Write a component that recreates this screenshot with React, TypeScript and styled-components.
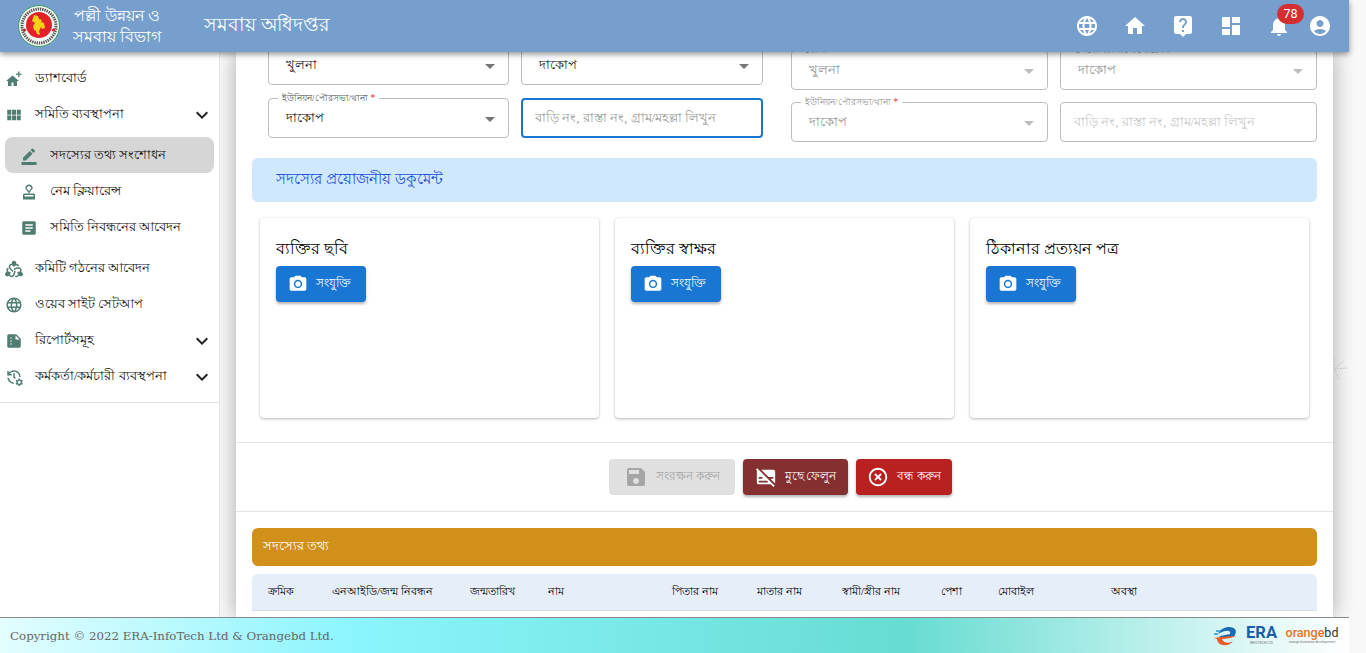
import React from "react";
import styled, { createGlobalStyle } from "styled-components";
import {
  MdLanguage, MdHome, MdLiveHelp, MdDashboard, MdNotifications, MdAccountCircle, MdViewModule,
  MdBorderColor, MdOutlineApproval, MdArticle, MdDiversity2, MdSummarize, MdManageHistory,
  MdExpandMore, MdPhotoCamera, MdSave, MdSubtitlesOff, MdHighlightOff, MdArrowDropDown,
} from "react-icons/md";

const Global = createGlobalStyle`
  html, body { margin: 0; padding: 0; height: 100%; overflow: hidden; }
  body { font-family: "Liberation Serif", serif; background: #f8f8f8; color: #000; }
  #root { height: 100%; }
`;
const Page = styled.div`
  height: 653px;
  display: flex;
  flex-direction: column;
  overflow: hidden;
`;
const Header = styled.header`
  height: 52px;
  width: 1349px;
  flex: none;
  background: #769fce;
  box-shadow: 0 2px 6px rgba(0,0,0,.45);
  display: flex;
  align-items: center;
  color: #fff;
  position: relative;
  z-index: 3;
  box-sizing: border-box;
  padding-left: 18px;
`;
const BrandText = styled.div`
  margin-left: 12px;
  font-size: 15.5px;
  line-height: 21px;
  text-align: center;
  width: 90px;
`;
const Title = styled.div`
  margin-left: 42px;
  font-size: 18.5px;
`;
const HeaderIcons = styled.div`
  margin-left: auto;
  display: flex;
  align-items: center;
  gap: 24px;
  padding-right: 17px;
  font-size: 24px;
`;
const IconSlot = styled.span`
  position: relative;
  display: flex;
  width: 24px;
  height: 24px;
  &:last-child { margin-left: -7px; }
`;
const Badge = styled.span`
  position: absolute;
  top: -10px;
  left: 10px;
  width: 27px;
  height: 20px;
  border-radius: 10px;
  background: #d32f2f;
  color: #fff;
  font-family: Roboto, sans-serif;
  font-size: 12.5px;
  line-height: 20px;
  text-align: center;
`;
const Workspace = styled.div`
  flex: 1;
  min-height: 0;
  display: flex;
`;
const Sidebar = styled.nav`
  width: 220px;
  flex: none;
  background: #fff;
  box-sizing: border-box;
  border-right: 1px solid #e4e4e4;
  position: relative;
  z-index: 2;
`;
const Menu = styled.div`
  padding: 9px 0 8px;
  border-bottom: 1px solid #e0e0e0;
  height: 351px;
  box-sizing: border-box;
`;
const Item = styled.div<{ $sub?: boolean; $active?: boolean; $gapTop?: number }>`
  height: 36px;
  display: flex;
  align-items: center;
  box-sizing: border-box;
  font-size: 12.5px;
  color: #111;
  margin: ${(p) => (p.$sub ? "0 5px 0 5px" : "0")};
  margin-top: ${(p) => p.$gapTop ?? 0}px;
  padding-left: ${(p) => (p.$sub ? "15px" : "5px")};
  padding-right: 5px;
  padding-top: ${(p) => (p.$active ? "2px" : "0")};
  border-radius: 8px;
  background: ${(p) => (p.$active ? "#d6d6d6" : "transparent")};
`;
const ItemIcon = styled.span`
  display: flex;
  width: 30px;
  font-size: 18px;
  color: #4f7d72;
  flex: none;
`;
const Chevron = styled.span`
  margin-left: auto;
  display: flex;
  font-size: 24px;
  color: #222;
`;
const Canvas = styled.main`
  flex: 1;
  min-width: 0;
  padding: 0 33px 0 16px;
  overflow: hidden;
  position: relative;
`;
const GutterMark = styled.svg`
  position: absolute;
  right: 17px;
  top: 301px;
  color: #c4c4c4;
`;
const Panel = styled.div`
  display: flow-root;
  background: #fff;
  min-height: 100%;
  box-shadow: 0 0 20px rgba(0,0,0,.32);
`;
const FormGrid = styled.div`
  margin-top: -7px;
  padding: 0 16px 0 32px;
  display: grid;
  grid-template-columns: 495px 526px;
  column-gap: 28px;
  align-items: start;
`;
const FieldGroup = styled.div<{ $right?: boolean }>`
  display: grid;
  grid-template-columns: 241px 242px;
  gap: 13px 12px;
  ${(p) => p.$right && "grid-template-columns: 257px 257px; row-gap: 12px; margin-top: 5px;"}
`;
const Field = styled.div<{ $disabled?: boolean; $focus?: boolean; $plain?: boolean }>`
  position: relative;
  height: 40px;
  box-sizing: border-box;
  border: ${(p) => (p.$focus ? "2px solid #1976d2" : "1px solid #bdbdbd")};
  border-radius: 4px;
  display: flex;
  align-items: center;
  padding-left: ${(p) => (p.$focus ? "12px" : p.$plain ? "13px" : "17px")};
  font-size: 13px;
  color: ${(p) => (p.$disabled ? "#8f8f8f" : "#111")};
  background: #fff;
`;
const Legend = styled.label<{ $disabled?: boolean }>`
  position: absolute;
  top: -7px;
  left: 9px;
  padding: 0 4px;
  background: #fff;
  font-size: 9px;
  line-height: 12px;
  white-space: nowrap;
  color: ${(p) => (p.$disabled ? "#8f8f8f" : "#555")};
`;
const Star = styled.span`
  color: #e53935;
  font-size: 10px;
`;
const Placeholder = styled.span<{ $disabled?: boolean }>`
  color: ${(p) => (p.$disabled ? "#c8c8c8" : "#9a9a9a")};
`;
const Arrow = styled.span<{ $disabled?: boolean }>`
  position: absolute;
  right: 6px;
  top: 8px;
  display: flex;
  font-size: 24px;
  color: ${(p) => (p.$disabled ? "#bdbdbd" : "#757575")};
`;
const DocBand = styled.div`
  margin: 16px 16px 0;
  height: 44px;
  box-sizing: border-box;
  padding: 0 0 2px 24px;
  background: #d0e8fd;
  border-radius: 6px;
  display: flex;
  align-items: center;
  font-size: 15px;
  color: #1d4ed8;
`;
const Cards = styled.div`
  margin: 16px 24px 0;
  display: grid;
  grid-template-columns: repeat(3, 339px);
  column-gap: 16px;
`;
const Card = styled.div`
  height: 200px;
  box-sizing: border-box;
  border-radius: 4px;
  padding: 20px 16px;
  background: #fff;
  box-shadow: 0 1px 3px rgba(0,0,0,.28), 0 0 1px rgba(0,0,0,.1);
`;
const CardTitle = styled.div`
  font-size: 16px;
  line-height: 22px;
  margin-bottom: 6px;
`;
const AttachButton = styled.button`
  width: 90px;
  height: 36px;
  border: 0;
  border-radius: 4px;
  background: #1976d2;
  color: #fff;
  display: flex;
  align-items: center;
  padding: 0 0 0 12px;
  gap: 8px;
  font-family: inherit;
  font-size: 12px;
  box-shadow: 0 2px 3px rgba(0,0,0,.3);
  svg { font-size: 20px; }
`;
const ActionBar = styled.div`
  margin-top: 24px;
  height: 70px;
  box-sizing: border-box;
  border-top: 1px solid #e4e4e4;
  border-bottom: 1px solid #e4e4e4;
  display: flex;
  justify-content: center;
  align-items: center;
  gap: 8px;
  padding-right: 8px;
`;
const ActionButton = styled.button<{ $bg: string; $fg: string; $w: number; $flat?: boolean }>`
  width: ${(p) => p.$w}px;
  height: 36px;
  border: 0;
  border-radius: 4px;
  background: ${(p) => p.$bg};
  color: ${(p) => p.$fg};
  display: flex;
  align-items: center;
  justify-content: center;
  gap: 8px;
  padding: 0;
  font-family: inherit;
  font-size: 11.5px;
  box-shadow: ${(p) => (p.$flat ? "none" : "0 2px 3px rgba(0,0,0,.3)")};
  svg { font-size: ${(p) => (p.$flat ? 24 : 22)}px; flex: none; }
`;
const MemberBand = styled.div`
  margin: 16px 16px 0;
  height: 38px;
  background: #d19019;
  border-radius: 6px;
  display: flex;
  align-items: center;
  padding-left: 11px;
  font-size: 12.5px;
  color: #fff;
`;
const TableHead = styled.div`
  margin: 8px 16px 0;
  height: 37px;
  box-sizing: border-box;
  background: #e6eefa;
  border-bottom: 1px solid #dcdcdc;
  border-radius: 6px 6px 0 0;
  display: grid;
  grid-template-columns: 64px 138px 78px 124px 85px 85px 99px 57px 113px 1fr;
  align-items: center;
  padding-left: 16px;
  font-size: 11px;
  color: #000;
`;
const Footer = styled.footer`
  height: 36px;
  width: 1349px;
  flex: none;
  box-sizing: border-box;
  border-top: 1px solid #8a8a8a;
  background: linear-gradient(90deg, #e3fdff 0%, #8cf5fd 26%, #66dcd2 67%, #ffffff 100%);
  display: flex;
  align-items: center;
  padding: 0 11px 0 10px;
  font-family: "DejaVu Serif", serif;
  font-size: 11.8px;
  color: #666;
  position: relative;
  z-index: 3;
`;
const FooterLogos = styled.div`
  margin-left: auto;
  display: flex;
  align-items: center;
  gap: 9px;
  font-family: Roboto, sans-serif;
`;
const Era = styled.div`
  display: flex;
  flex-direction: column;
  align-items: center;
  color: #1b5fa8;
  font-weight: 700;
  font-size: 16.5px;
  line-height: 16px;
`;
const Tiny = styled.span`
  font-size: 3.5px;
  line-height: 5px;
  font-weight: 400;
  color: #777;
  white-space: nowrap;
`;
const Orange = styled.div`
  width: 52px;
  display: flex;
  flex-direction: column;
  align-items: center;
  color: #e8702a;
  font-size: 12.5px;
  line-height: 14px;
  font-weight: 500;
  b { font-weight: 400; color: #333; }
`;

const Logo = () => (
  <svg width="42" height="42" viewBox="0 0 42 42">
    <circle cx="21" cy="21" r="20.5" fill="#f4f8f4" stroke="#3f9a62" strokeWidth="1" />
    <circle cx="21" cy="21" r="17" fill="none" stroke="#222" strokeWidth="3" strokeDasharray="1.4 .9" opacity=".75" />
    <circle cx="21" cy="20" r="13" fill="#e32128" />
    <path d="M16 10l4 1 1 3 3 1-1 2 3 1 1 5-3 1-1-2-2 4 1 4-3-1-1-3-2-1-1-4 2-3-3-2z" fill="#f6d116" />
    <circle cx="6.5" cy="25" r="1.6" fill="#d32027" />
    <circle cx="35.5" cy="25" r="1.6" fill="#d32027" />
  </svg>
);
const HomePlus = () => (
  <svg width="18" height="18" viewBox="0 0 18 18" fill="currentColor">
    <path d="M7.5 5.5L1 11h2v5h3.5v-3.5h2V16H12v-5h2z" />
    <path d="M13 1.5h1.6v2h2v1.6h-2v2H13v-2h-2V3.500h2z" opacity=".85" />
  </svg>
);
const EraMark = () => (
  <svg width="24" height="22" viewBox="0 0 24 22">
    <path d="M5 9c3-7 13-9 17-5 2 3 0 7-2 8H6c2-2 9-2 11-3 1-2-1-4-4-3-3 0-6 2-8 3z" fill="#1b6cb5" />
    <path d="M1 13c6-1 14-2 22-2-4 2-10 3-14 3 1 4 7 5 11 2-3 5-12 6-15 1-1-1-1-3-1-3z" fill="#ee5a24" />
    <path d="M3 6h5M1 9h4" stroke="#2f8fd6" strokeWidth="1.3" />
  </svg>
);

type F = { label?: string; req?: boolean; value?: string; ph?: string; focus?: boolean };
const left: F[] = [
  { label: "জেলা", value: "খুলনা" },
  { label: "উপজেলা/থানা", value: "দাকোপ" },
  { label: "ইউনিয়ন/পৌরসভা/থানা", req: true, value: "দাকোপ" },
  { ph: "বাড়ি নং, রাস্তা নং, গ্রাম/মহল্লা লিখুন", focus: true },
];
const right: F[] = [
  { label: "জেলা", value: "খুলনা" },
  { label: "উপজেলা/সিটি কর্পোরেশন", value: "দাকোপ" },
  { label: "ইউনিয়ন/পৌরসভা/থানা", req: true, value: "দাকোপ" },
  { ph: "বাড়ি নং, রাস্তা নং, গ্রাম/মহল্লা লিখুন" },
];
const FieldView = ({ f, disabled }: { f: F; disabled?: boolean }) => (
  <Field $disabled={disabled} $focus={f.focus} $plain={!f.value}>
    {f.label && (
      <Legend $disabled={disabled}>
        {f.label} {f.req && <Star>*</Star>}
      </Legend>
    )}
    {f.value ?? <Placeholder $disabled={disabled}>{f.ph}</Placeholder>}
    {f.value && (
      <Arrow $disabled={disabled}>
        <MdArrowDropDown />
      </Arrow>
    )}
  </Field>
);
const heads = ["ক্রমিক", "এনআইডি/জন্ম নিবন্ধন", "জন্মতারিখ", "নাম", "পিতার নাম", "মাতার নাম", "স্বামী/স্ত্রীর নাম", "পেশা", "মোবাইল", "অবস্থা"];
const docs = ["ব্যক্তির ছবি", "ব্যক্তির স্বাক্ষর", "ঠিকানার প্রত্যয়ন পত্র"];

export default function App() {
  return (
    <Page>
      <Global />
      <Header>
        <Logo />
        <BrandText>পল্লী উন্নয়ন ও সমবায় বিভাগ</BrandText>
        <Title>সমবায় অধিদপ্তর</Title>
        <HeaderIcons>
          <IconSlot><MdLanguage /></IconSlot>
          <IconSlot><MdHome /></IconSlot>
          <IconSlot><MdLiveHelp /></IconSlot>
          <IconSlot><MdDashboard /></IconSlot>
          <IconSlot><MdNotifications /><Badge>78</Badge></IconSlot>
          <IconSlot><MdAccountCircle /></IconSlot>
        </HeaderIcons>
      </Header>
      <Workspace>
        <Sidebar>
          <Menu>
            <Item><ItemIcon><HomePlus /></ItemIcon>ড্যাশবোর্ড</Item>
            <Item><ItemIcon><MdViewModule /></ItemIcon>সমিতি ব্যবস্থাপনা<Chevron><MdExpandMore /></Chevron></Item>
            <Item $sub $active $gapTop={4}><ItemIcon><MdBorderColor /></ItemIcon>সদস্যের তথ্য সংশোধন</Item>
            <Item $sub $gapTop={1}><ItemIcon><MdOutlineApproval /></ItemIcon>নেম ক্লিয়ারেন্স</Item>
            <Item $sub><ItemIcon><MdArticle /></ItemIcon>সমিতি নিবন্ধনের আবেদন</Item>
            <Item $gapTop={5}><ItemIcon><MdDiversity2 /></ItemIcon>কমিটি গঠনের আবেদন</Item>
            <Item><ItemIcon><MdLanguage /></ItemIcon>ওয়েব সাইট সেটআপ</Item>
            <Item><ItemIcon><MdSummarize /></ItemIcon>রিপোর্টসমূহ<Chevron><MdExpandMore /></Chevron></Item>
            <Item><ItemIcon><MdManageHistory /></ItemIcon>কর্মকর্তা/কর্মচারী ব্যবস্থপনা<Chevron><MdExpandMore /></Chevron></Item>
          </Menu>
        </Sidebar>
        <Canvas>
          <Panel>
            <FormGrid>
              <FieldGroup>{left.map((f, i) => <FieldView key={i} f={f} />)}</FieldGroup>
              <FieldGroup $right>{right.map((f, i) => <FieldView key={i} f={f} disabled />)}</FieldGroup>
            </FormGrid>
            <DocBand>সদস্যের প্রয়োজনীয় ডকুমেন্ট</DocBand>
            <Cards>
              {docs.map((d) => (
                <Card key={d}>
                  <CardTitle>{d}</CardTitle>
                  <AttachButton><MdPhotoCamera />সংযুক্তি</AttachButton>
                </Card>
              ))}
            </Cards>
            <ActionBar>
              <ActionButton $bg="#e0e0e0" $fg="#a6a6a6" $w={126} $flat><MdSave />সংরক্ষন করুন</ActionButton>
              <ActionButton $bg="#843030" $fg="#fff" $w={105}><MdSubtitlesOff />মুছে ফেলুন</ActionButton>
              <ActionButton $bg="#b92020" $fg="#fff" $w={96}><MdHighlightOff />বন্ধ করুন</ActionButton>
            </ActionBar>
            <MemberBand>সদস্যের তথ্য</MemberBand>
            <TableHead>{heads.map((h) => <span key={h}>{h}</span>)}</TableHead>
          </Panel>
          <GutterMark width="16" height="32" viewBox="0 0 16 32" fill="none" stroke="currentColor" strokeWidth="1" strokeDasharray="2 1">
            <path d="M1 16L11 8M1 16L14 15M1 16L6 26M1 16V4" />
          </GutterMark>
        </Canvas>
      </Workspace>
      <Footer>
        Copyright © 2022 ERA-InfoTech Ltd &amp; Orangebd Ltd.
        <FooterLogos>
          <EraMark />
          <Era>ERA<Tiny>INFOTECH LTD</Tiny></Era>
          <Orange><span>orange<b>bd</b></span><Tiny>orange business development</Tiny></Orange>
        </FooterLogos>
      </Footer>
    </Page>
  );
}
